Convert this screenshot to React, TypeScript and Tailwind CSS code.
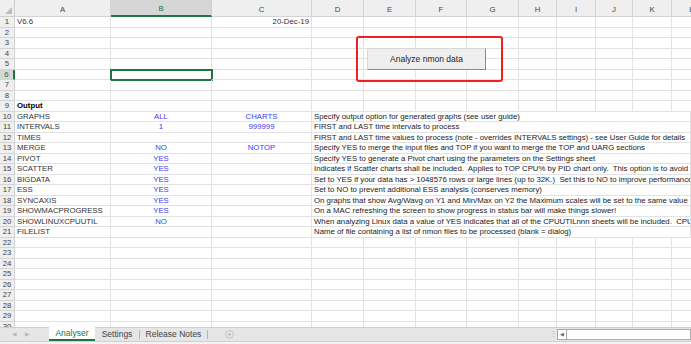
import React from "react";

const cols = [
  { key: "A", w: 96 },
  { key: "B", w: 101 },
  { key: "C", w: 100 },
  { key: "D", w: 52 },
  { key: "E", w: 52 },
  { key: "F", w: 51 },
  { key: "G", w: 52 },
  { key: "H", w: 38 },
  { key: "I", w: 39 },
  { key: "J", w: 37 },
  { key: "K", w: 39 },
  { key: "L", w: 40 },
];

type Row = { a?: string; b?: string; c?: string; d?: string; bold?: boolean; date?: boolean };

const rows: Row[] = [
  { a: "V6.6", c: "20-Dec-19", date: true },
  {},
  {},
  {},
  {},
  {},
  {},
  {},
  { a: "Output", bold: true },
  { a: "GRAPHS", b: "ALL", c: "CHARTS", d: "Specify output option for generated graphs (see user guide)" },
  { a: "INTERVALS", b: "1", c: "999999", d: "FIRST and LAST time intervals to process" },
  { a: "TIMES", d: "FIRST and LAST time values to process (note - overrides INTERVALS settings) - see User Guide for details" },
  { a: "MERGE", b: "NO", c: "NOTOP", d: "Specify YES to merge the input files and TOP if you want to merge the TOP and UARG sections" },
  { a: "PIVOT", b: "YES", d: "Specify YES to generate a Pivot chart using the parameters on the Settings sheet" },
  { a: "SCATTER", b: "YES", d: "Indicates if Scatter charts shall be included.  Applies to TOP CPU% by PID chart only.  This option is to avoid" },
  { a: "BIGDATA", b: "YES", d: "Set to YES if your data has > 1048576 rows or large lines (up to 32K.)  Set this to NO to improve performance" },
  { a: "ESS", b: "YES", d: "Set to NO to prevent additional ESS analysis (conserves memory)" },
  { a: "SYNCAXIS", b: "YES", d: "On graphs that show Avg/Wavg on Y1 and Min/Max on Y2 the Maximum scales will be set to the same value" },
  { a: "SHOWMACPROGRESS", b: "YES", d: "On a MAC refreshing the screen to show progress in status bar will make things slower!" },
  { a: "SHOWLINUXCPUUTIL", b: "NO", d: "When analyzing Linux data a value of YES indicates that all of the CPUUTILnnn sheets will be included.  CPUUTIL" },
  { a: "FILELIST", d: "Name of file containing a list of nmon files to be processed (blank = dialog)" },
  {}, {}, {}, {}, {}, {}, {}, {}, {},
];

const cell = "h-[10.5px] shrink-0 border-r border-b border-[#e2e2e2] overflow-hidden whitespace-pre leading-[10px]";

function App() {
  return (
    <div
      className="w-[691px] h-[344px] flex flex-col bg-white overflow-hidden text-[7.8px] text-[#222]"
      style={{ fontFamily: '"Liberation Sans", Arial, sans-serif' }}
    >
      <div className="relative flex-1 overflow-hidden">
        {/* column headers */}
        <div className="flex h-[17px]">
          <div className="w-[15px] shrink-0 bg-[#efefef] border-r border-b border-[#cfcfcf] flex items-end justify-end p-[2px]">
            <svg width="7" height="7" viewBox="0 0 7 7">
              <polygon points="7,0 7,7 0,7" fill="#bdbdbd" />
            </svg>
          </div>
          {cols.map((c) => (
            <div
              key={c.key}
              style={{ width: c.w }}
              className={
                c.key === "B"
                  ? "shrink-0 bg-[#d6d6d6] border-r border-[#cfcfcf] border-b-2 border-b-[#217346] text-[#1e6b41] flex items-center justify-center pt-[3px]"
                  : "shrink-0 bg-[#efefef] border-r border-b border-[#d4d4d4] text-[#444] flex items-center justify-center pt-[3px]"
              }
            >
              {c.key}
            </div>
          ))}
        </div>

        {rows.map((r, i) => {
          const n = i + 1;
          const sel = n === 6;
          return (
            <div key={n} className="flex">
              <div
                className={
                  sel
                    ? "w-[15px] h-[10.5px] shrink-0 bg-[#d6d6d6] border-r-2 border-r-[#217346] border-b border-[#d4d4d4] text-[#1e6b41] text-center leading-[10px]"
                    : "w-[15px] h-[10.5px] shrink-0 bg-[#efefef] border-r border-b border-[#d4d4d4] text-[#444] text-center leading-[10px]"
                }
              >
                {n}
              </div>
              <div style={{ width: cols[0].w }} className={`${cell} pl-[2px] ${r.bold ? "font-bold text-black" : "text-[#333]"}`}>
                {r.a}
              </div>
              <div
                style={{ width: cols[1].w }}
                className={`${cell} text-center text-[#3c3cf0] ${sel ? "outline-2 outline-[#217346] -outline-offset-1" : ""}`}
              >
                {r.b}
              </div>
              <div
                style={{ width: cols[2].w }}
                className={`${cell} ${r.date ? "text-right pr-[2px] text-[#333]" : "text-center text-[#3c3cf0]"}`}
              >
                {r.c}
              </div>
              {r.d ? (
                <div className={`${cell} flex-1 pl-[2px] text-[#222]`}>{r.d}</div>
              ) : (
                cols.slice(3).map((c) => (
                  <div key={c.key} style={{ width: c.w }} className={cell} />
                ))
              )}
            </div>
          );
        })}

        {/* floating button with red highlight */}
        <div className="absolute left-[356px] top-[36px] w-[147px] h-[46px] border-2 border-[#f02020] rounded-[3px]">
          <div className="absolute left-[9px] top-[10px] w-[119px] h-[22px] bg-[#efefef] border border-[#d8d8d8] border-r-[#8a8a8a] border-b-[#8a8a8a] flex items-center justify-center text-[8.5px] text-[#222]">
            Analyze nmon data
          </div>
        </div>
      </div>

      {/* sheet tabs */}
      <div className="h-[17px] shrink-0 flex flex-col">
        <div className="h-[14px] bg-[#e6e6e6] border-t border-[#cfcfcf] flex items-stretch text-[8.5px]">
          <div className="w-[49px] flex items-center gap-[8px] pl-[12px] text-[#bbb] text-[6px]">
            <span>◀</span>
            <span>▶</span>
          </div>
          <div className="w-[46px] bg-white border-b-2 border-[#217346] text-[#217346] flex items-center justify-center -mt-px">
            Analyser
          </div>
          <div className="w-[45px] flex items-center justify-center text-[#444] border-r border-[#b5b5b5] my-[2px]">
            Settings
          </div>
          <div className="w-[68px] flex items-center justify-center text-[#444] border-r border-[#b5b5b5] my-[2px]">
            Release Notes
          </div>
          <div className="w-[42px] flex items-center justify-center">
            <svg width="9" height="9" viewBox="0 0 10 10">
              <circle cx="5" cy="5" r="4.3" fill="none" stroke="#b5b5b5" strokeWidth="0.8" />
              <path d="M5 2.8v4.4M2.8 5h4.4" stroke="#b5b5b5" strokeWidth="0.8" />
            </svg>
          </div>
          <div className="flex-1" />
          <div className="w-[8px] flex items-center justify-center text-[#aaa] text-[7px]">⋮</div>
          <div className="w-[134px] flex items-center py-[1px]">
            <div className="h-full w-full bg-white border border-[#aaa] flex items-center">
              <div className="w-[9px] h-full border-r border-[#aaa] flex items-center justify-center text-[5px] text-[#666]">◀</div>
            </div>
          </div>
        </div>
        <div className="flex-1 bg-[#f3f3f3] border-t border-[#d0d0d0]" />
      </div>
    </div>
  );
}

export default App;
